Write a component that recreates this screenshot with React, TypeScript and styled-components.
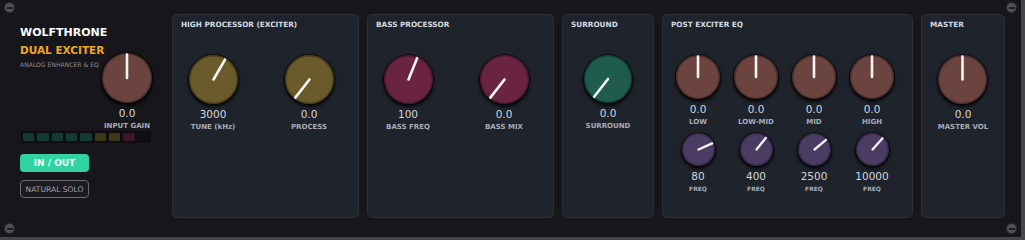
import React from 'react'
import styled, { createGlobalStyle } from 'styled-components'

const colors = {
  page: '#45464c',
  frame: '#16161b',
  panel: '#1f232b',
  panelBorder: '#2b3039',
  title: '#d6dae2',
  value: '#d2d6de',
  label: '#a7acb7',
  orange: '#f2a623',
  brown: '#6b433f',
  olive: '#6b5a2a',
  plum: '#6a2442',
  teal: '#1f5c4e',
  purple: '#4a3c62',
  pointer: '#f4f4f4',
  accent: '#2fd4a2',
}

const GlobalStyle = createGlobalStyle`
  html, body {
    margin: 0;
    padding: 0;
    background: ${colors.page};
  }
  body {
    font-family: "DejaVu Sans", "Liberation Sans", sans-serif;
  }
`

const Frame = styled.div`
  position: relative;
  width: 1021px;
  height: 237px;
  box-sizing: border-box;
  background: ${colors.frame};
  display: flex;
  align-items: stretch;
  gap: 8px;
  padding: 14px 15px 19px 0;
`

const Screw = styled.div<{ $top?: boolean; $left?: boolean }>`
  position: absolute;
  ${(p) => (p.$top ? 'top: 3px;' : 'bottom: 4px;')}
  ${(p) => (p.$left ? 'left: 5px;' : 'right: 5px;')}
  width: 9px;
  height: 9px;
  border-radius: 50%;
  background: #505157;
  box-shadow: 0 0 0 1px #2a2a2e;
  display: flex;
  align-items: center;
  justify-content: center;

  &::after {
    content: '';
    width: 6px;
    height: 2px;
    background: #1f1f23;
  }
`

const LeftColumn = styled.div`
  width: 144px;
  padding: 12px 0 0 20px;
  display: flex;
  flex-direction: column;
  align-items: flex-start;
`

const TopRow = styled.div`
  display: flex;
  align-items: flex-start;
`

const Brand = styled.div`
  width: 82px;
  display: flex;
  flex-direction: column;
`

const Name = styled.div`
  color: #ffffff;
  font-weight: bold;
  font-size: 11px;
  line-height: 13px;
  white-space: nowrap;
`

const Product = styled.div`
  color: ${colors.orange};
  font-weight: bold;
  font-size: 10.5px;
  line-height: 13px;
  margin-top: 5px;
  white-space: nowrap;
`

const Subtitle = styled.div`
  color: #8c8d95;
  font-size: 6.1px;
  line-height: 8px;
  margin-top: 4px;
  white-space: nowrap;
`

const InputGain = styled.div`
  margin-top: 27px;
`

const Meter = styled.div`
  width: 126px;
  height: 8px;
  margin-left: 1px;
  padding: 2px;
  background: #0d0e11;
  border-radius: 2px;
  display: flex;
  gap: 3px;
`

const Segment = styled.div<{ $color: string }>`
  flex: 1;
  background: ${(p) => p.$color};
  border-radius: 1px;
`

const ToggleButton = styled.button<{ $active?: boolean }>`
  width: 69px;
  height: 18px;
  margin-top: ${(p) => (p.$active ? '11px' : '8px')};
  padding: 0;
  box-sizing: border-box;
  border-radius: 4px;
  font-family: "DejaVu Sans", sans-serif;
  white-space: nowrap;
  cursor: pointer;
  ${(p) =>
    p.$active
      ? `
    background: ${colors.accent};
    border: none;
    color: #f4fffa;
    font-weight: bold;
    font-size: 9px;
  `
      : `
    background: #1b1b20;
    border: 1px solid #6c6c73;
    color: #a3a3ab;
    font-size: 7.6px;
  `}
`

const Panel = styled.section<{ $width: number }>`
  width: ${(p) => p.$width}px;
  flex: none;
  box-sizing: border-box;
  background: ${colors.panel};
  border: 1px solid ${colors.panelBorder};
  border-radius: 5px;
  padding-top: 5px;
  display: flex;
  flex-direction: column;
`

const PanelTitle = styled.h4`
  margin: 0;
  padding-left: 8px;
  color: ${colors.title};
  font-size: 7.3px;
  line-height: 10px;
  font-weight: bold;
  white-space: nowrap;
`

const KnobRow = styled.div<{ $center?: boolean }>`
  margin-top: 25px;
  display: flex;
  gap: 32px;
  padding-left: ${(p) => (p.$center ? '0' : '8px')};
  justify-content: ${(p) => (p.$center ? 'center' : 'flex-start')};
`

const EqGrid = styled.div`
  margin-top: 25px;
  padding-left: 6px;
  display: grid;
  grid-template-columns: repeat(4, 58px);
  row-gap: 6px;
`

const KnobGroup = styled.div<{ $width?: number }>`
  width: ${(p) => (p.$width ? `${p.$width}px` : 'auto')};
  display: flex;
  flex-direction: column;
  align-items: center;
`

const KnobBody = styled.div<{ $size: number; $color: string }>`
  width: ${(p) => p.$size}px;
  height: ${(p) => p.$size}px;
  border-radius: 50%;
  background: ${(p) => p.$color};
  box-shadow:
    inset 0 0 0 1.5px rgba(0, 0, 0, 0.28),
    0 0 0 1px rgba(0, 0, 0, 0.45),
    0 2px 3px 1px rgba(0, 0, 0, 0.75);

  svg {
    display: block;
  }
`

const Value = styled.div`
  margin-top: 4px;
  color: ${colors.value};
  font-size: 10.5px;
  line-height: 12px;
  white-space: nowrap;
`

const Label = styled.div<{ $small?: boolean }>`
  margin-top: 2px;
  color: ${colors.label};
  font-weight: bold;
  font-size: ${(p) => (p.$small ? '6px' : '7px')};
  line-height: 10px;
  white-space: nowrap;
`

interface KnobProps {
  size: number
  color: string
  angle: number
  value: string
  label: string
  width?: number
  small?: boolean
}

const Knob: React.FC<KnobProps> = (props) => {
  const c = props.size / 2
  const len = c - 1.5
  const rad = (props.angle * Math.PI) / 180
  const x2 = c + Math.sin(rad) * len
  const y2 = c - Math.cos(rad) * len
  return (
    <KnobGroup $width={props.width}>
      <KnobBody $size={props.size} $color={props.color}>
        <svg width={props.size} height={props.size}>
          <line
            x1={c}
            y1={c}
            x2={x2}
            y2={y2}
            stroke={colors.pointer}
            strokeWidth={props.small ? 2.3 : 2.6}
            strokeLinecap="round"
          />
        </svg>
      </KnobBody>
      <Value>{props.value}</Value>
      <Label $small={props.small}>{props.label}</Label>
    </KnobGroup>
  )
}

// dim, unlit meter segments
const meterColors = [
  '#143a31',
  '#143a31',
  '#143a31',
  '#143a31',
  '#143a31',
  '#3d3619',
  '#3d3619',
  '#3e1626',
  '#0f1013',
]

const eqBands = [
  { label: 'LOW', freq: '80', angle: 66 },
  { label: 'LOW-MID', freq: '400', angle: 39 },
  { label: 'MID', freq: '2500', angle: 50 },
  { label: 'HIGH', freq: '10000', angle: 42 },
]

const App: React.FC = () => {
  return (
    <>
      <GlobalStyle />
      <Frame>
        <Screw $top $left />
        <Screw $left />
        <Screw $top />
        <Screw />

        <LeftColumn>
          <TopRow>
            <Brand>
              <Name>WOLFTHRONE</Name>
              <Product>DUAL EXCITER</Product>
              <Subtitle>ANALOG ENHANCER &amp; EQ</Subtitle>
            </Brand>
            <InputGain>
              <Knob size={50} color={colors.brown} angle={0} value="0.0" label="INPUT GAIN" width={50} />
            </InputGain>
          </TopRow>
          <Meter>
            {meterColors.map((c, i) => (
              <Segment key={i} $color={c} />
            ))}
          </Meter>
          <ToggleButton $active>IN / OUT</ToggleButton>
          <ToggleButton>NATURAL SOLO</ToggleButton>
        </LeftColumn>

        <Panel $width={187}>
          <PanelTitle>HIGH PROCESSOR (EXCITER)</PanelTitle>
          <KnobRow>
            <Knob size={49} color={colors.olive} angle={30} value="3000" label="TUNE (kHz)" width={64} />
            <Knob size={49} color={colors.olive} angle={-142} value="0.0" label="PROCESS" width={64} />
          </KnobRow>
        </Panel>

        <Panel $width={187}>
          <PanelTitle>BASS PROCESSOR</PanelTitle>
          <KnobRow>
            <Knob size={49} color={colors.plum} angle={22} value="100" label="BASS FREQ" width={64} />
            <Knob size={49} color={colors.plum} angle={-142} value="0.0" label="BASS MIX" width={64} />
          </KnobRow>
        </Panel>

        <Panel $width={92}>
          <PanelTitle>SURROUND</PanelTitle>
          <KnobRow $center>
            <Knob size={48} color={colors.teal} angle={-142} value="0.0" label="SURROUND" />
          </KnobRow>
        </Panel>

        <Panel $width={251}>
          <PanelTitle>POST EXCITER EQ</PanelTitle>
          <EqGrid>
            {eqBands.map((b) => (
              <Knob key={b.label} size={44} color={colors.brown} angle={0} value="0.0" label={b.label} />
            ))}
            {eqBands.map((b) => (
              <Knob key={b.freq} size={33} color={colors.purple} angle={b.angle} value={b.freq} label="FREQ" small />
            ))}
          </EqGrid>
        </Panel>

        <Panel $width={84}>
          <PanelTitle>MASTER</PanelTitle>
          <KnobRow $center>
            <Knob size={49} color={colors.brown} angle={0} value="0.0" label="MASTER VOL" />
          </KnobRow>
        </Panel>
      </Frame>
    </>
  )
}

export default App
